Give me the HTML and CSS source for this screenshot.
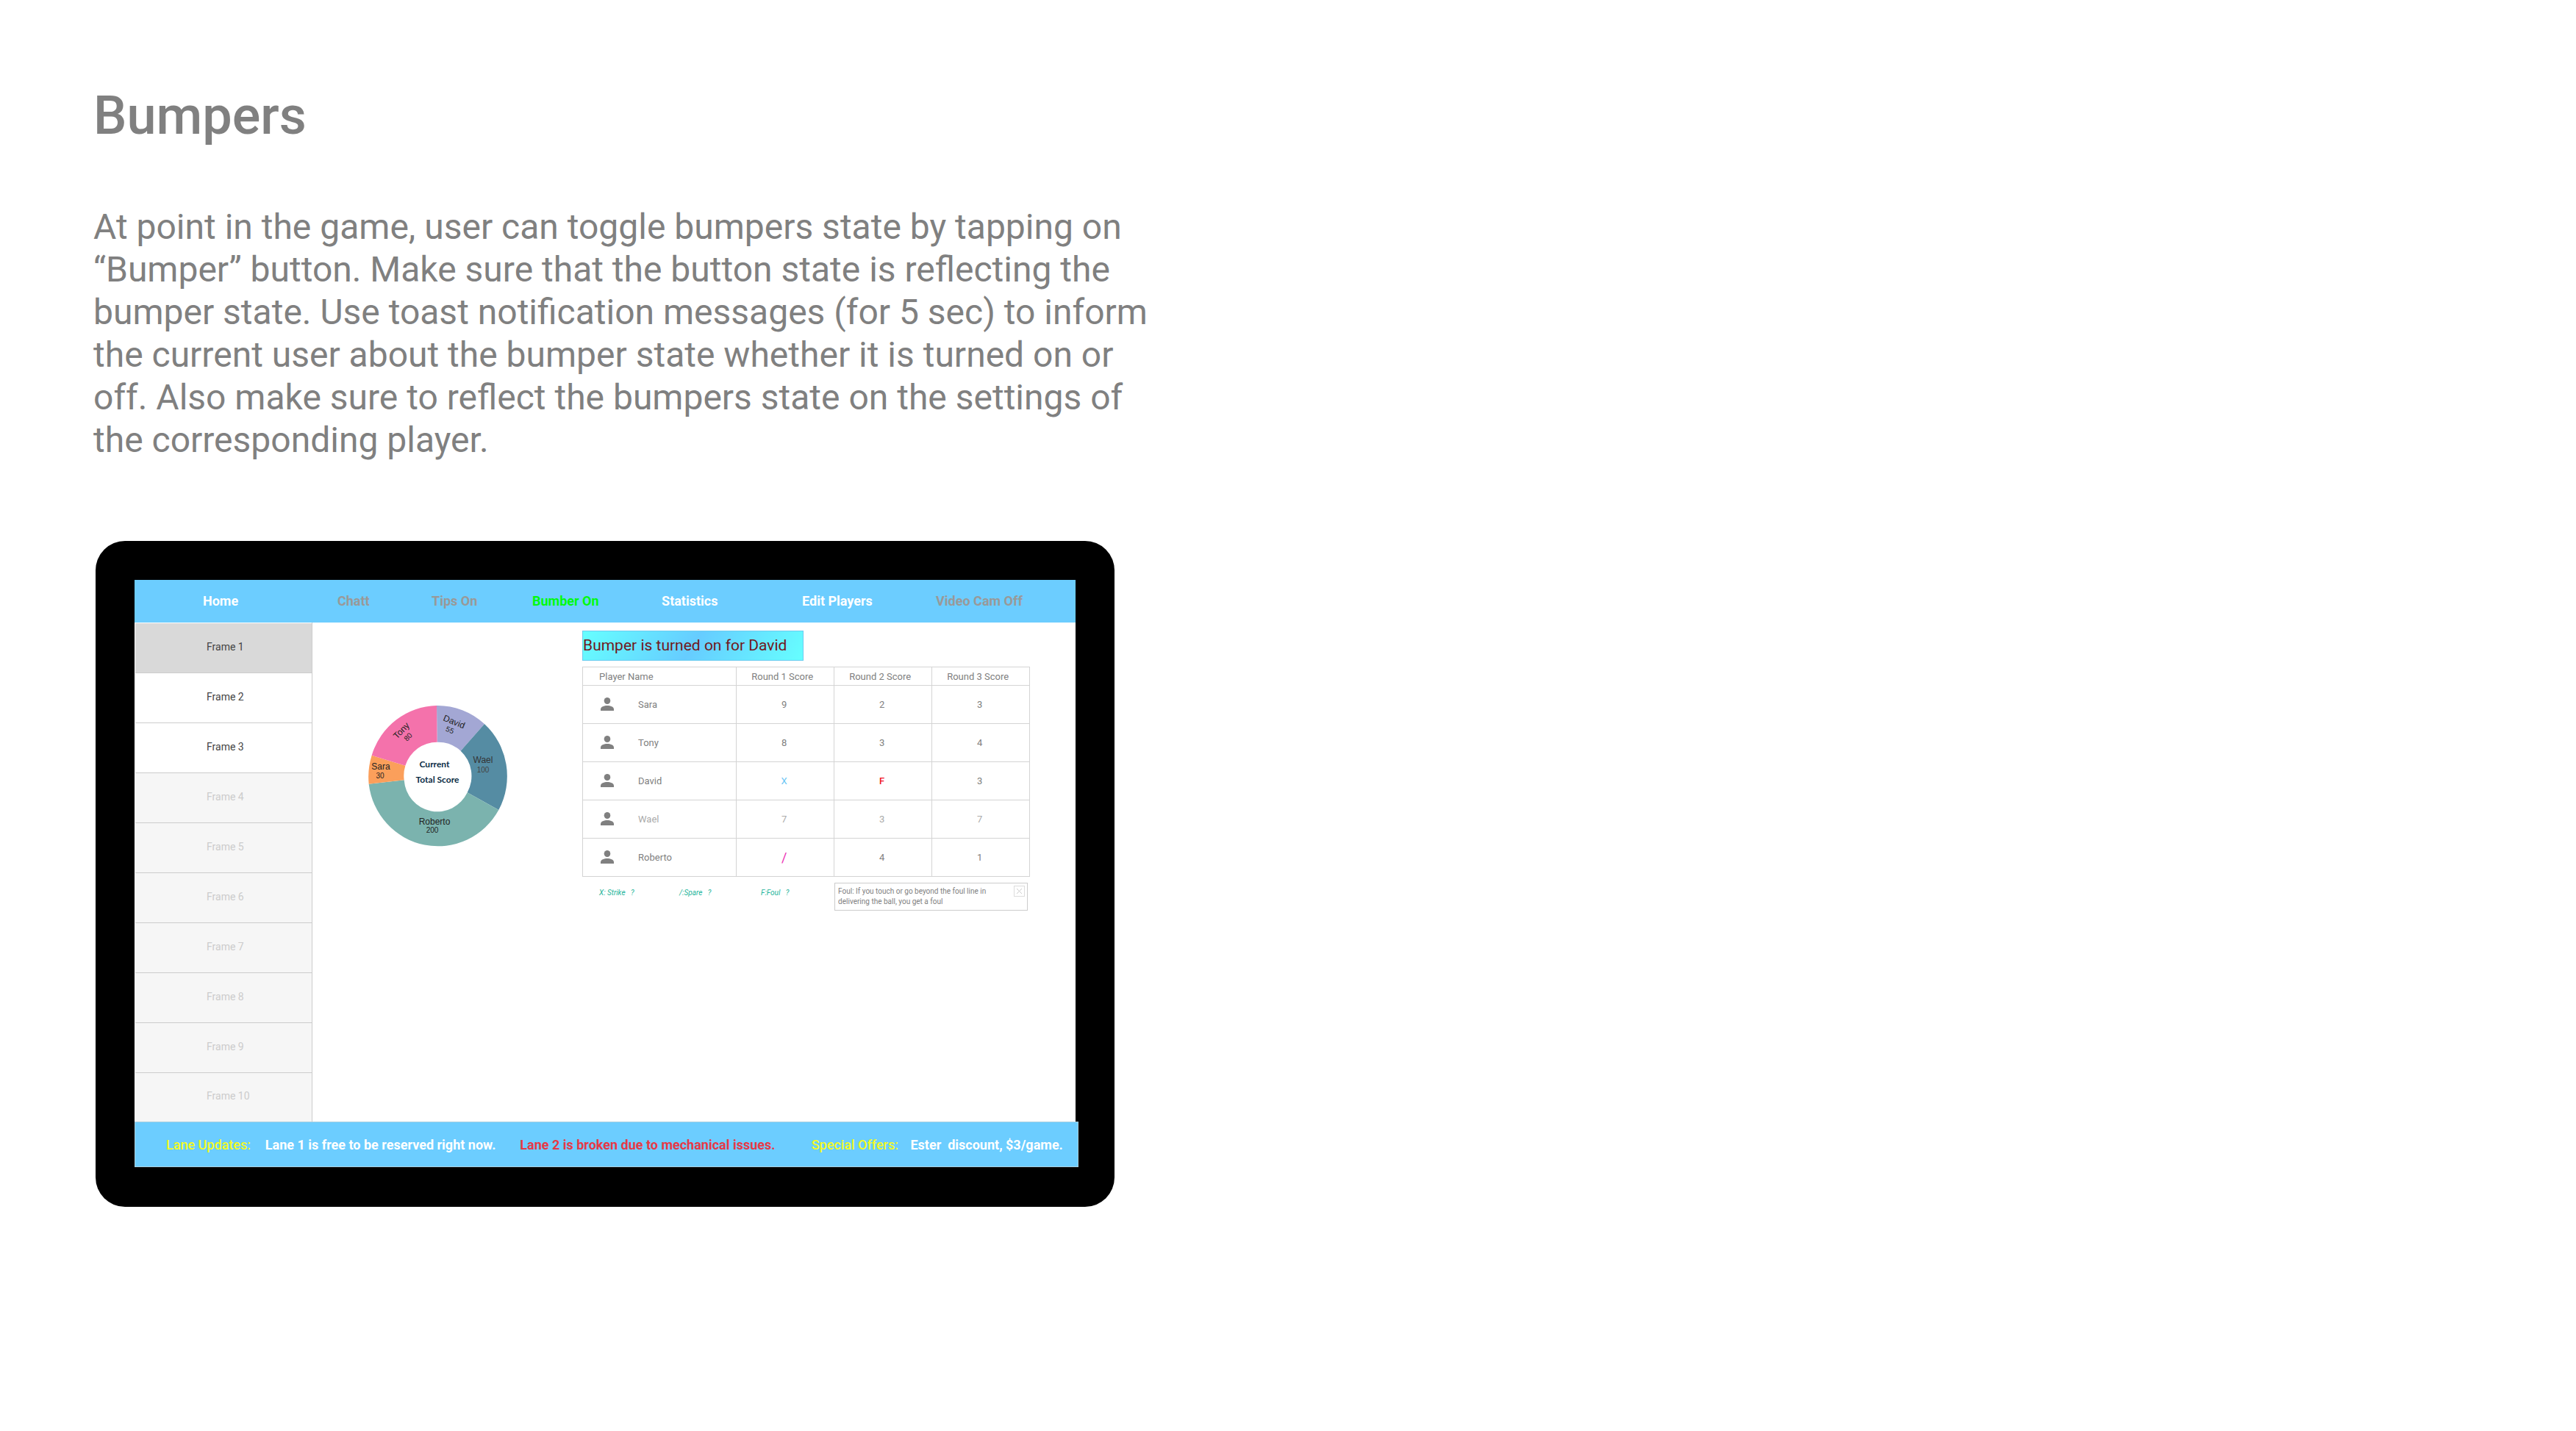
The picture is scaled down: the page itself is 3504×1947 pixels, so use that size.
FILE: index.html
```html
<!DOCTYPE html>
<html lang="en">
<head>
<meta charset="utf-8">
<title>Bumpers</title>
<link rel="stylesheet" href="styles.css">
</head>
<body>
<svg class="defs" aria-hidden="true"><symbol id="person" viewBox="0 0 18 18"><ellipse cx="9" cy="4.5" rx="4.3" ry="4.5"/><path d="M0 18v-2.200C0 12.500 5 11 9 11s9 1.500 9 4.800V18z"/></symbol></svg>
<main class="slide">
  <h1 class="title">Bumpers</h1>
  <p class="intro">At point in the game, user can toggle bumpers state by tapping on “Bumper” button. Make sure that the button state is reflecting the bumper state. Use toast notification messages (for 5 sec) to inform the current user about the bumper state whether it is turned on or off. Also make sure to reflect the bumpers state on the settings of the corresponding player.</p>

  <section class="tablet" aria-label="Bowling lane tablet">
    <nav class="nav">
      <a class="nav-item" href="#home">Home</a>
      <button class="nav-item off" type="button">Chatt</button>
      <button class="nav-item off" type="button">Tips On</button>
      <button class="nav-item on" type="button">Bumber On</button>
      <a class="nav-item" href="#statistics">Statistics</a>
      <a class="nav-item" href="#players">Edit Players</a>
      <button class="nav-item off" type="button">Video Cam Off</button>
    </nav>

    <div class="screen">
      <ol class="frames">
        <li><button class="frame current" type="button">Frame 1</button></li>
        <li><button class="frame" type="button">Frame 2</button></li>
        <li><button class="frame" type="button">Frame 3</button></li>
        <li><button class="frame" type="button" disabled>Frame 4</button></li>
        <li><button class="frame" type="button" disabled>Frame 5</button></li>
        <li><button class="frame" type="button" disabled>Frame 6</button></li>
        <li><button class="frame" type="button" disabled>Frame 7</button></li>
        <li><button class="frame" type="button" disabled>Frame 8</button></li>
        <li><button class="frame" type="button" disabled>Frame 9</button></li>
        <li><button class="frame" type="button" disabled>Frame 10</button></li>
      </ol>

      <div class="chart">
        <svg class="donut" viewBox="0 0 250 250" role="img" aria-label="Current total score">
          <g transform="scale(.333333)">
            <path fill="#a3a7d4" d="M372 90A284 288.500 0 0 1 567 165L470 275A136 138.500 0 0 0 374 239Z"/>
            <path fill="#558ca3" d="M567 165A284 288.500 0 0 1 625 516L497 445A136 138.500 0 0 0 470 275Z"/>
            <path fill="#7bb3ae" d="M625 516A284 288.500 0 0 1 95 410L239 394A136 138.500 0 0 0 497 445Z"/>
            <path fill="#fb9f5b" d="M95 410A284 288.500 0 0 1 107 293L244 335A136 138.500 0 0 0 239 394Z"/>
            <path fill="#f472ab" d="M107 293A284 288.500 0 0 1 372 90L374 239A136 138.500 0 0 0 244 335Z"/>
          </g>
          <g class="slice-label">
            <g transform="translate(148 51) rotate(22)"><text y="5">David</text><text class="value" x="-1" y="17">55</text></g>
            <g transform="translate(76 64) rotate(-46)"><text y="4">Tony</text><text class="value" y="16">80</text></g>
            <g class="dim"><text x="187" y="108">Wael</text><text class="value" x="187" y="121">100</text></g>
            <text x="48" y="117">Sara</text><text class="value" x="47" y="129">30</text>
            <text x="121" y="192">Roberto</text><text class="value" x="118" y="203">200</text>
          </g>
          <g class="donut-title"><text x="121" y="114">Current</text><text x="125" y="135">Total Score</text></g>
        </svg>
      </div>

      <div class="scores">
        <p class="toast" role="status">Bumper is turned on for David</p>
        <table class="table">
          <colgroup><col class="col-name"><col><col><col></colgroup>
          <thead>
            <tr><th scope="col">Player Name</th><th scope="col">Round 1 Score</th><th scope="col">Round 2 Score</th><th scope="col">Round 3 Score</th></tr>
          </thead>
          <tbody>
            <tr><th scope="row"><span class="player"><svg class="avatar"><use href="#person"/></svg>Sara</span></th><td>9</td><td>2</td><td>3</td></tr>
            <tr><th scope="row"><span class="player"><svg class="avatar"><use href="#person"/></svg>Tony</span></th><td>8</td><td>3</td><td>4</td></tr>
            <tr><th scope="row"><span class="player"><svg class="avatar"><use href="#person"/></svg>David</span></th><td class="strike">X</td><td class="foul">F</td><td>3</td></tr>
            <tr class="faded"><th scope="row"><span class="player"><svg class="avatar"><use href="#person"/></svg>Wael</span></th><td>7</td><td>3</td><td>7</td></tr>
            <tr><th scope="row"><span class="player"><svg class="avatar"><use href="#person"/></svg>Roberto</span></th><td class="spare">/</td><td>4</td><td>1</td></tr>
          </tbody>
        </table>
        <div class="legend">
          <span class="key">X: Strike <button class="help" type="button">?</button></span>
          <span class="key">/:Spare <button class="help" type="button">?</button></span>
          <span class="key">F:Foul <button class="help" type="button">?</button></span>
          <aside class="tip">
            <p>Foul: If you touch or go beyond the foul line in delivering the ball, you get a foul</p>
            <button class="close" type="button" aria-label="Close"><svg viewBox="0 0 13 13"><path d="M3 3l7 7M10 3l-7 7"/></svg></button>
          </aside>
        </div>
      </div>
    </div>

    <footer class="ticker">
      <strong class="topic">Lane Updates:</strong>
      <span>Lane 1 is free to be reserved right now.</span>
      <span class="alert">Lane 2 is broken due to mechanical issues.</span>
      <strong class="topic">Special Offers:</strong>
      <span class="offer">Ester  discount, $3/game.</span>
    </footer>
  </section>
</main>
</body>
</html>
```
FILE: styles.css
```css
* { box-sizing: border-box; }

body {
  margin: 0;
  background: #fff;
  color: #808080;
  font-family: Roboto, "Liberation Sans", sans-serif;
}

button {
  padding: 0;
  border: 0;
  background: none;
  color: inherit;
  font: inherit;
  text-align: left;
}

.defs { display: block; width: 0; height: 0; }

.slide { padding: 116px 127px; }

.title {
  margin: 0;
  font-size: 72px;
  font-weight: 500;
  line-height: 84px;
}

.intro {
  width: 44.5%;
  margin: 80px 0 0;
  font-size: 48px;
  line-height: 58px;
}

.tablet {
  width: 42.65%;
  margin: 108px 0 0 3px;
  padding: 53px 53px 54px;
  border-radius: 40px;
  background: #000;
}

/* top bar */
.nav {
  display: grid;
  grid-template-columns: 183fr 128fr 137fr 176fr 191fr 182fr 190fr;
  align-items: center;
  height: 58px;
  padding: 0 0 2px 93px;
  background: #6ccdff;
  color: #fff;
  font-size: 18px;
  font-weight: 700;
}
.nav-item { color: inherit; text-decoration: none; white-space: nowrap; }
.nav-item.off { color: #999; }
.nav-item.on { color: #00fb0c; }

.screen {
  display: grid;
  grid-template-columns: 242fr 367fr 671fr;
  background: #fff;
}

/* frame list */
.frames {
  margin: 0;
  padding: 1px 0 0 1px;
  border-right: 1px solid #ccc;
  list-style: none;
}
.frame {
  display: block;
  width: 100%;
  height: 68px;
  padding: 0 0 4px 97px;
  border-bottom: 1px solid #ccc;
  background: #fff;
  color: #444;
  font-size: 14px;
}
.frame.current { background: #d9d9d9; }
.frame:disabled { background: #f6f6f6; color: #ccc; }
.frames li:last-child .frame { height: 66px; border-bottom: 0; }

/* score chart */
.chart { padding: 83px 0 0 45px; }
.donut { display: block; width: 250px; height: 250px; }
.slice-label {
  fill: #222;
  font-family: "Liberation Sans", sans-serif;
  font-size: 12px;
  text-anchor: middle;
}
.value { font-size: 10px; }
.dim { fill: #333; }
.dim .value { fill: #444; }
.donut-title {
  fill: #0a2c44;
  font-family: Lato, "Noto Sans", sans-serif;
  font-size: 12px;
  font-weight: 700;
  text-anchor: middle;
}

/* score table */
.scores { padding: 11px 62px 0 0; }
.toast {
  width: fit-content;
  margin: 0 0 8px;
  padding: 0 22px 0 0;
  border: 1px solid #6cccf0;
  background: linear-gradient(121deg, #6ff, #6cf, #6ff);
  color: #701820;
  font-size: 21px;
  line-height: 39px;
}
.table {
  width: 100%;
  border-collapse: collapse;
  table-layout: fixed;
  font-size: 13px;
}
.col-name { width: 34.4%; }
.table th,
.table td {
  height: 52px;
  padding: 0 3px 1px 0;
  border: 1px solid #d4d4d4;
  font-weight: 400;
  text-align: center;
}
.table thead th { height: 25px; padding: 0 0 0 20px; text-align: left; }
.table thead th:first-child { padding-left: 22px; }
.table tbody th { padding: 0 0 1px 24px; }
.player { display: flex; gap: 33px; align-items: center; }
.avatar { width: 18px; height: 18px; fill: #808080; }
.faded { color: #aaa; }
.table .strike { color: #6ac5f4; }
.table .foul { color: #f0141c; font-weight: 500; }
.table .spare { color: #ec30b4; font-size: 18px; }

.legend {
  display: grid;
  grid-template-columns: 109fr 111fr 100fr 263fr;
  margin: 8px 3px 0 0;
  padding-left: 23px;
  font-size: 10px;
}
.key { padding-top: 8px; color: #1cb49a; font-style: italic; }
.help { margin-left: 5px; }
.tip {
  display: flex;
  justify-content: space-between;
  padding: 3px;
  border: 1px solid #ccc;
}
.tip p { flex: 1; margin: 0; padding: 1px 20px 1px 1px; line-height: 14px; }
.close { width: 15px; height: 15px; border: 1px solid #ddd; }
.close svg { display: block; width: 13px; height: 13px; fill: none; stroke: #ccc; }

/* bottom ticker */
.ticker {
  display: grid;
  grid-template-columns: 135fr 347fr 397fr 135fr 228fr;
  align-items: center;
  height: 62px;
  margin-right: -4px;
  padding-left: 42px;
  border: 1px solid #a9cfe0;
  background: #6ccdff;
  color: #fff;
  font-size: 18px;
  font-weight: 700;
  white-space: nowrap;
}
.topic { color: #f4fb1e; font-weight: 500; }
.alert { color: #e63946; }
.offer { white-space: pre; }
```
